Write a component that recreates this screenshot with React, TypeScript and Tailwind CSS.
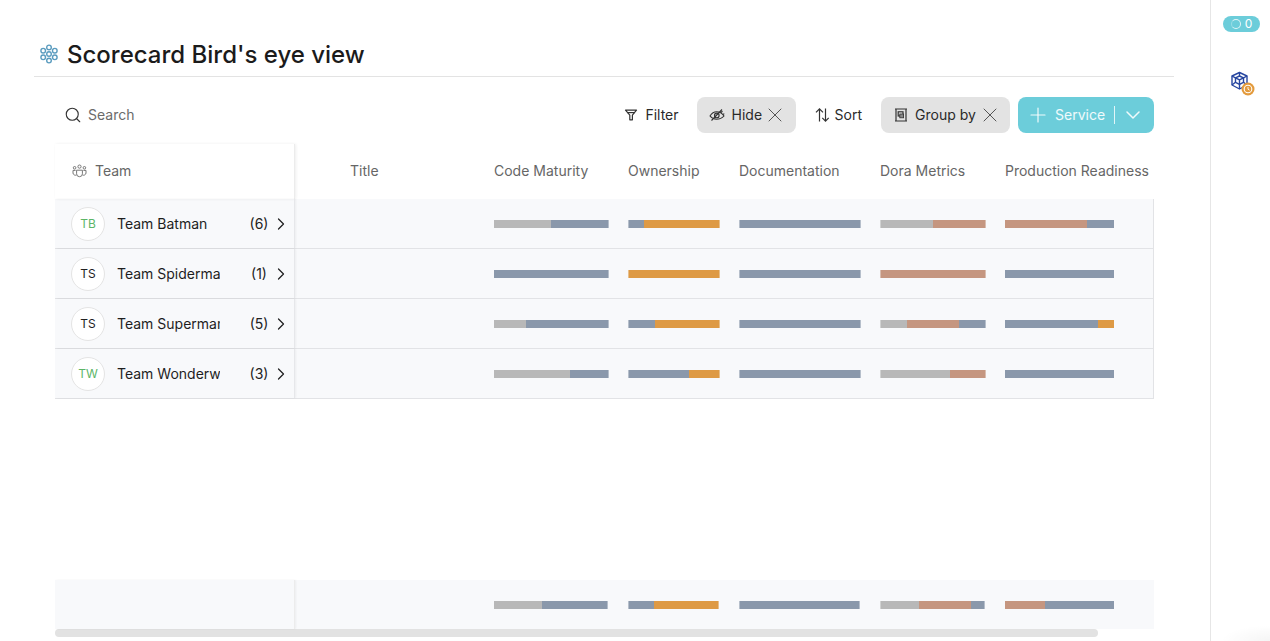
import { ChevronDown, ChevronRight, Plus, Search, X } from "lucide-react";

const GREY = "#b8b8b8";
const BLUE = "#8a98ab";
const ORANGE = "#de9a45";
const COPPER = "#c59680";

type Segment = [string, number];

const columns = [
  { name: "Code Maturity", width: 134, fadeLeft: false, fadeRight: true },
  { name: "Ownership", width: 111, fadeLeft: true, fadeRight: true },
  { name: "Documentation", width: 141, fadeLeft: true, fadeRight: true },
  { name: "Dora Metrics", width: 125, fadeLeft: true, fadeRight: true },
  { name: "Production Readiness", width: 149, fadeLeft: false, fadeRight: false },
];

const teams: { initials: string; green: boolean; name: string; count: number; bars: Segment[][] }[] = [
  {
    initials: "TB",
    green: true,
    name: "Team Batman",
    count: 6,
    bars: [
      [[GREY, 57], [BLUE, 57]],
      [[BLUE, 15], [ORANGE, 75]],
      [[BLUE, 120]],
      [[GREY, 52], [COPPER, 52]],
      [[COPPER, 82], [BLUE, 27]],
    ],
  },
  {
    initials: "TS",
    green: false,
    name: "Team Spiderman",
    count: 1,
    bars: [
      [[BLUE, 114]],
      [[ORANGE, 90]],
      [[BLUE, 120]],
      [[COPPER, 104]],
      [[BLUE, 109]],
    ],
  },
  {
    initials: "TS",
    green: false,
    name: "Team Superman",
    count: 5,
    bars: [
      [[GREY, 32], [BLUE, 82]],
      [[BLUE, 26], [ORANGE, 64]],
      [[BLUE, 120]],
      [[GREY, 26], [COPPER, 52], [BLUE, 26]],
      [[BLUE, 93], [ORANGE, 16]],
    ],
  },
  {
    initials: "TW",
    green: true,
    name: "Team Wonderwoman",
    count: 3,
    bars: [
      [[GREY, 76], [BLUE, 38]],
      [[BLUE, 60], [ORANGE, 30]],
      [[BLUE, 120]],
      [[GREY, 69], [COPPER, 35]],
      [[BLUE, 109]],
    ],
  },
];

const totals: Segment[][] = [
  [[GREY, 48], [BLUE, 65]],
  [[BLUE, 25], [ORANGE, 64]],
  [[BLUE, 119]],
  [[GREY, 38], [COPPER, 52], [BLUE, 13]],
  [[COPPER, 40], [BLUE, 69]],
];

const Bar = ({ segments, fadeLeft, fadeRight }: { segments: Segment[]; fadeLeft: boolean; fadeRight: boolean }) => (
  <div className="flex h-2">
    {fadeLeft && <div className="w-px opacity-60" style={{ backgroundColor: segments[0][0] }} />}
    {segments.map(([color, width], i) => (
      <div key={i} style={{ backgroundColor: color, width }} />
    ))}
    {fadeRight && (
      <div className="w-px opacity-60" style={{ backgroundColor: segments[segments.length - 1][0] }} />
    )}
  </div>
);

const BarCells = ({ bars }: { bars: Segment[][] }) => (
  <div className="flex flex-1 items-center">
    <div className="w-[199px]" />
    {columns.map((col, i) => (
      <div key={col.name} style={{ width: col.width }}>
        <Bar segments={bars[i]} fadeLeft={col.fadeLeft} fadeRight={col.fadeRight} />
      </div>
    ))}
  </div>
);

const FlowerIcon = () => (
  <svg width="20" height="20" viewBox="0 0 20 20" fill="none" stroke="#5b9cbf" strokeWidth="1.4">
    <circle cx="10" cy="10" r="2.3" />
    <circle cx="10" cy="3.4" r="2.3" />
    <circle cx="10" cy="16.6" r="2.3" />
    <circle cx="4.2" cy="6.7" r="2.3" />
    <circle cx="15.8" cy="6.7" r="2.3" />
    <circle cx="4.2" cy="13.3" r="2.3" />
    <circle cx="15.8" cy="13.3" r="2.3" />
  </svg>
);

const TeamIcon = () => (
  <svg width="15" height="14" viewBox="0 0 15 14" fill="none" stroke="#777" strokeWidth="1">
    <circle cx="7.5" cy="2.6" r="1.6" />
    <circle cx="2.6" cy="3.8" r="1.3" />
    <circle cx="12.4" cy="3.8" r="1.3" />
    <path d="M4.6 6.2h5.8v3.6a2.9 2.9 0 0 1-5.8 0z" />
    <path d="M4.4 11A2.4 2.4 0 0 1 1 9V6.4h2.6M10.6 11A2.4 2.4 0 0 0 14 9V6.4h-2.6" />
  </svg>
);

const FilterIcon = () => (
  <svg width="14" height="14" viewBox="0 0 14 14" fill="none" stroke="#333" strokeWidth="1.2" strokeLinejoin="round">
    <path d="M1.5 2.2h11L8.4 7.2v4.6H5.8V7.2z" />
    <path d="M3.2 4.6h7.6" />
  </svg>
);

const HideIcon = () => (
  <svg width="16" height="14" viewBox="0 0 16 14" fill="none" stroke="#333" strokeWidth="1.1">
    <path d="M1 8c1.8-2.8 4-4.2 6.6-4.2S12.9 5 15 8c-2 2.2-4.4 3.2-7.4 3.2S2.8 10.2 1 8z" />
    <circle cx="7.8" cy="7.4" r="2.3" />
    <path d="M2.5 12.5 13 1.5M12 4.5l1.5-1.2M14 6.5l1.3-.9" />
  </svg>
);

const SortIcon = () => (
  <svg width="15" height="16" viewBox="0 0 15 16" fill="none" stroke="#333" strokeWidth="1.2">
    <path d="M4.5 14.5V1.8M1 5.3l3.5-3.5L8 5.3" />
    <path d="M10.5 1.5v12.7M7.3 10.8l3.2 3.4 3.2-3.4" />
  </svg>
);

const GroupIcon = () => (
  <svg width="14" height="14" viewBox="0 0 14 14" fill="none" stroke="#333" strokeWidth="1.2">
    <path d="M1 1h12M1 13h12M2 1v12M12 1v12" />
    <rect x="4.2" y="3.8" width="4.8" height="4.2" />
    <rect x="5.8" y="6" width="3.8" height="3.8" fill="#888" stroke="#333" strokeWidth="0.8" />
  </svg>
);

const CubeIcon = () => (
  <svg width="26" height="26" viewBox="0 0 26 26" fill="none">
    <g stroke="#2746a0" strokeWidth="1.4" strokeLinejoin="round">
      <path d="M9.5 1.5 17 5v9l-7.5 4L2 14V5z" />
      <path d="M5.5 6.8 9.5 5l4 1.8v4.5l-4 2-4-2z" />
      <path d="M5.5 6.8l4 2 4-2M9.5 8.8v4.5M2 5l3.5 1.8M17 5l-3.5 1.8M2 14l3.5-2.7M17 14l-3.5-2.7M9.5 1.5V5M9.5 13.3V18" />
    </g>
    <circle cx="18" cy="18" r="6.5" fill="#e39a3c" />
    <circle cx="18" cy="18" r="3.8" fill="none" stroke="#fff" strokeWidth="1.1" />
    <path d="M18 16v2.2l1.5 1" fill="none" stroke="#fff" strokeWidth="0.9" />
  </svg>
);

const TeamRow = ({ team }: { team: (typeof teams)[number] }) => (
  <div className="flex h-[50px] border-r border-b border-[#e2e3e6] bg-[#f8f9fb]">
    <div className="flex w-[240px] shrink-0 items-center border-r border-[#e6e7ea] pl-4 shadow-[1px_0_2px_rgba(0,0,0,0.05)]">
      <div
        className={`flex h-[34px] w-[34px] shrink-0 items-center justify-center rounded-full border border-[#e4e4e4] bg-white text-xs ${
          team.green ? "text-[#5cb567]" : "text-[#222]"
        }`}
      >
        {team.initials}
      </div>
      <div className="ml-3 w-[103px] overflow-hidden text-sm whitespace-nowrap text-[#1e1e1e]">{team.name}</div>
      <div className="ml-[19px] w-[40px] shrink-0 text-center text-sm text-[#222]">({team.count})</div>
      <ChevronRight className="-ml-2 h-5 w-5 shrink-0 text-[#222]" strokeWidth={1.5} />
    </div>
    <BarCells bars={team.bars} />
  </div>
);

export default function App() {
  return (
    <div className="flex h-[641px] overflow-hidden bg-white font-['Inter',sans-serif]">
      <main className="w-[1210px] shrink-0">
        <div className="mx-[34px] flex h-[77px] w-[1140px] items-end border-b border-[#e3e3e3] pb-[6px]">
          <div className="mb-[6px] ml-[5px]">
            <FlowerIcon />
          </div>
          <h1 className="ml-2 text-2xl leading-[30px] font-medium text-[#1b1b1b]">Scorecard Bird's eye view</h1>
        </div>

        <div className="mt-5 mr-[56px] ml-[55px] flex h-9 items-center">
          <Search className="ml-[9px] h-[18px] w-[18px] text-[#333]" strokeWidth={1.5} />
          <span className="ml-[6px] text-sm text-[#6b6b6b]">Search</span>
          <div className="ml-auto flex items-center text-sm text-[#2a2a2a]">
            <FilterIcon />
            <span className="ml-[7px]">Filter</span>
            <div className="ml-[18px] flex h-9 w-[99px] items-center rounded-lg bg-[#e3e3e3] pl-3">
              <HideIcon />
              <span className="ml-[7px]">Hide</span>
              <X className="ml-px h-6 w-6 text-[#555]" strokeWidth={1} />
            </div>
            <div className="ml-[19px]">
              <SortIcon />
            </div>
            <span className="ml-[5px]">Sort</span>
            <div className="ml-[19px] flex h-9 w-[129px] items-center rounded-lg bg-[#e3e3e3] pl-[13px]">
              <GroupIcon />
              <span className="ml-[7px]">Group by</span>
              <X className="ml-[2px] h-6 w-6 text-[#555]" strokeWidth={1} />
            </div>
            <div className="ml-2 flex h-9 w-[136px] items-center rounded-lg bg-[#6ccdda] pl-2 text-white/90">
              <Plus className="h-6 w-6" strokeWidth={1.2} />
              <span className="ml-[5px]">Service</span>
              <div className="ml-[9px] h-[18px] w-px bg-white/80" />
              <ChevronDown className="ml-[6px] h-6 w-6" strokeWidth={1.5} />
            </div>
          </div>
        </div>

        <div className="mt-[11px] mr-[56px] ml-[55px]">
          <div className="flex h-[55px] text-sm text-[#666]">
            <div className="flex h-full w-[240px] shrink-0 items-center border-r border-[#ececec] pb-[2px] pl-[17px] shadow-[1px_0_3px_rgba(0,0,0,0.07)]">
              <TeamIcon />
              <span className="ml-2">Team</span>
            </div>
            <div className="flex items-center pb-[2px]">
              <div className="w-[199px] pl-[55px]">Title</div>
              {columns.map((col) => (
                <div key={col.name} className="whitespace-nowrap" style={{ width: col.width }}>
                  {col.name}
                </div>
              ))}
            </div>
          </div>

          {teams.map((team) => (
            <TeamRow key={team.name} team={team} />
          ))}

          <div className="mt-[181px] flex h-[49px] bg-[#f8f9fb]">
            <div className="w-[240px] shrink-0 border-r border-[#ececec] shadow-[1px_0_2px_rgba(0,0,0,0.05)]" />
            <BarCells bars={totals} />
          </div>
          <div className="h-2 w-[1043px] rounded-full bg-[#e2e2e2]" />
        </div>
      </main>

      <aside className="relative flex-1 overflow-hidden border-l border-[#e6e6e6]">
        <div className="mt-4 ml-3 flex h-4 w-[37px] items-center justify-center gap-1 rounded-full bg-[#6ccdda] text-xs text-white">
          <span className="h-[10px] w-[10px] rounded-full border border-white/80 border-l-white/30" />
          <span>0</span>
        </div>
        <div className="mt-[39px] ml-[19px]">
          <CubeIcon />
        </div>
        <div className="absolute right-0 bottom-0 h-4 w-[50px] bg-[radial-gradient(ellipse_at_bottom_right,rgba(0,0,0,0.04),transparent_70%)]" />
      </aside>
    </div>
  );
}
